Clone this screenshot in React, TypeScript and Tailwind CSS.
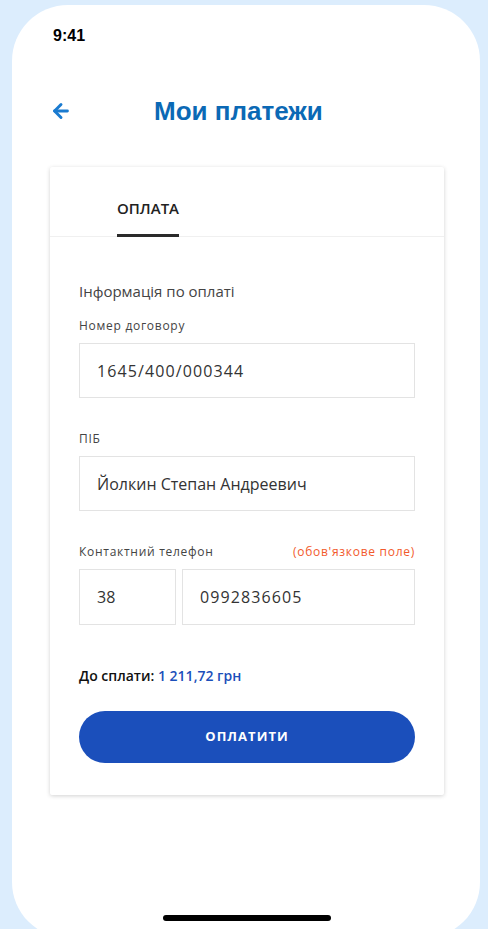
import { ArrowLeft } from 'lucide-react'

function Field({ label, value, mono }: { label: string; value: string; mono?: boolean }) {
  return (
    <div className="mt-[33px] first:mt-0">
      <div className="text-[12px] leading-[16px] tracking-[0.06em] text-[#444]">{label}</div>
      <div
        className={`mt-[9px] h-[55px] border border-[#e3e3e3] flex items-center px-[17px] text-[16px] text-[#333] ${
          mono ? 'tracking-[1.1px]' : ''
        }`}
      >
        {value}
      </div>
    </div>
  )
}

export default function App() {
  return (
    <div className="w-full h-[929px] overflow-hidden bg-[#dcedfd] pt-[5px] pl-[12px] pr-[8px] font-['Open_Sans',sans-serif]">
      {/* Телефон */}
      <div className="relative h-[933px] rounded-[56px] bg-white">
        <div className="pt-[21px] pl-[41px] text-[16px] leading-[20px] font-bold text-black font-['Liberation_Sans',sans-serif]">
          9:41
        </div>

        {/* Заголовок */}
        <div className="mt-[50px] h-[30px] flex items-center pl-[38px]">
          <ArrowLeft className="w-[22px] h-[22px] text-[#1a7bd0]" strokeWidth={3.2} />
          <h1 className="ml-[82px] text-[26px] leading-[30px] font-bold text-[#0b69b5] font-['Liberation_Sans',sans-serif]">
            Мои платежи
          </h1>
        </div>

        {/* Карточка оплаты */}
        <div className="ml-[38px] mt-[41px] w-[394px] bg-white rounded-[2px] shadow-[0_1px_4px_rgba(0,0,0,0.18)]">
          <div className="h-[70px] border-b border-[#f0f0f0] pl-[67px] flex items-end">
            <div className="text-[15px] font-semibold text-[#222] pb-[15px] border-b-[3px] border-[#2a2a2a] -mb-px">
              ОПЛАТА
            </div>
          </div>

          <div className="px-[29px] pt-[44px] pb-[32px]">
            <div className="text-[15px] leading-[20px] text-[#444]">Інформація по оплаті</div>

            <div className="mt-[17px]">
              <Field label="Номер договору" value="1645/400/000344" mono />
              <Field label="ПІБ" value="Йолкин Степан Андреевич" />

              <div className="mt-[33px]">
                <div className="flex justify-between text-[12px] leading-[16px] tracking-[0.06em]">
                  <span className="text-[#444]">Контактний телефон</span>
                  <span className="text-[#f25a2c]">(обов'язкове поле)</span>
                </div>
                <div className="mt-[9px] flex gap-[6px]">
                  <div className="w-[97px] h-[56px] border border-[#e3e3e3] flex items-center px-[17px] text-[16px] text-[#333]">
                    38
                  </div>
                  <div className="flex-1 h-[56px] border border-[#e3e3e3] flex items-center px-[17px] text-[16px] tracking-[1.1px] text-[#333]">
                    0992836605
                  </div>
                </div>
              </div>
            </div>

            <div className="mt-[41px] text-[14px] leading-[20px] font-semibold text-[#111]">
              До сплати: <span className="text-[#1c4fba]">1 211,72 грн</span>
            </div>

            <button className="mt-[25px] w-full h-[52px] rounded-full bg-[#1b4fbb] text-white text-[13px] font-bold tracking-[0.08em]">
              ОПЛАТИТИ
            </button>
          </div>
        </div>

        {/* Home indicator */}
        <div className="absolute left-[151px] top-[910px] w-[168px] h-[6px] rounded-full bg-black" />
      </div>
    </div>
  )
}
